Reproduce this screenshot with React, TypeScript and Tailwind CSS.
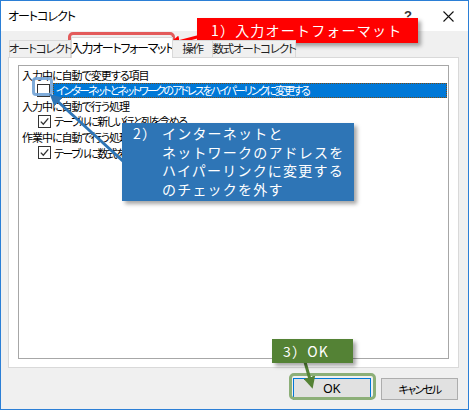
import React from "react";

const jp = "font-['Noto_Sans_CJK_JP','Noto_Sans',sans-serif] [font-feature-settings:'palt']";

function CheckBox({ checked }: { checked?: boolean }) {
  return (
    <span className="w-[13px] h-[13px] shrink-0 border border-[#333] bg-white flex items-center justify-center">
      {checked && (
        <svg width="11" height="11" viewBox="0 0 11 11">
          <path d="M1.8 5.6 L4.3 8.2 L9.3 2.3" fill="none" stroke="#333" strokeWidth="1.3" />
        </svg>
      )}
    </span>
  );
}

const tabs = [
  { label: "オートコレクト", w: "w-[62px]" },
  { label: "入力オートフォーマット", w: "w-[102px]", active: true },
  { label: "操作", w: "w-[41px]" },
  { label: "数式オートコレクト", w: "w-[84px]" },
];

export default function App() {
  return (
    <div className={`relative w-[469px] h-[410px] overflow-hidden bg-white text-[#000] ${jp}`}>
      {/* Window */}
      <div className="flex flex-col h-full border border-[#2b7fd6]">
        {/* Title bar */}
        <div className="h-[30px] flex items-center bg-white pl-[7px] pr-[14px]">
          <span className="text-[12px] tracking-[-1px]">オートコレクト</span>
          <span className="ml-auto text-[13px] font-bold text-[#333] mr-[31px] font-['Liberation_Sans',sans-serif]">?</span>
          <svg width="11" height="11" viewBox="0 0 11 11">
            <path d="M0.5 0.5 L10.5 10.5 M10.5 0.5 L0.5 10.5" stroke="#111" strokeWidth="1.1" />
          </svg>
        </div>

        {/* Body */}
        <div className="flex-1 bg-[#f0f0f0] flex flex-col pl-[7px] pr-[9px] pt-[6px]">
          {/* Tabs */}
          <div className="h-[20px] flex items-end pl-[1px] relative z-10">
            {tabs.map((t) =>
              t.active ? (
                <div
                  key={t.label}
                  className={`${t.w} h-[21px] -mb-px bg-white border border-[#d9d9d9] border-b-0 flex items-center justify-center whitespace-nowrap text-[12px] tracking-[-1.3px]`}
                >
                  {t.label}
                </div>
              ) : (
                <div
                  key={t.label}
                  className={`${t.w} h-[17px] bg-[#f0f0f0] border border-[#d9d9d9] border-b-0 -ml-px first:ml-0 flex items-center justify-center whitespace-nowrap text-[11.5px] tracking-[-1.2px] text-[#222]`}
                >
                  {t.label}
                </div>
              )
            )}
          </div>

          {/* Panel */}
          <div className="h-[311px] bg-white border border-[#d9d9d9] pl-[9px] pr-[9px] pt-[7px] pb-[8px] flex">
            <div className="flex-1 border border-[#a7a7a7] pt-[1px] flex flex-col text-[11px] whitespace-nowrap">
              <div className="h-[15.6px] flex items-center pl-[3px] tracking-[-1px]">入力中に自動で変更する項目</div>
              <div className="h-[15.6px] flex items-center pl-[18px] pr-px">
                <CheckBox />
                <span className="ml-[3px] flex-1 h-[15px] bg-[#0078d7] text-white border border-dotted border-[#7a4a10] flex items-center pl-[2px] tracking-[-2px]">
                  インターネットとネットワークのアドレスをハイパーリンクに変更する
                </span>
              </div>
              <div className="h-[15.6px] flex items-center pl-[3px] tracking-[-1px]">入力中に自動で行う処理</div>
              <div className="h-[15.6px] flex items-center pl-[19px] gap-[3px]">
                <CheckBox checked />
                <span className="tracking-[-1.5px]">テーブルに新しい行と列を含める</span>
              </div>
              <div className="h-[15.6px] flex items-center pl-[3px] tracking-[-1px]">作業中に自動で行う処理</div>
              <div className="h-[15.6px] flex items-center pl-[19px] gap-[3px]">
                <CheckBox checked />
                <span className="tracking-[-1.5px]">テーブルに数式をコピーして集計列を作成する</span>
              </div>
            </div>
          </div>

          {/* Buttons */}
          <div className="flex justify-end gap-[10px] pt-[10px] pr-px">
            <button className="w-[78px] h-[22px] bg-[#e1e1e1] border border-[#0078d7] text-[12px] font-['Liberation_Sans','Noto_Sans_CJK_JP',sans-serif]">
              OK
            </button>
            <button className="w-[77px] h-[22px] bg-[#e1e1e1] border border-[#adadad] text-[11px] tracking-[-1.5px]">
              キャンセル
            </button>
          </div>
        </div>
      </div>

      {/* Highlights */}
      <div className="absolute left-[68px] top-[32px] w-[107px] h-[26px] border-[3px] border-[#e35b5b] rounded-[5px] pointer-events-none" />
      <div className="absolute left-[32px] top-[77px] w-[21px] h-[19px] border-[3px] border-[#72a3d6]/90 rounded-[4px] pointer-events-none" />
      <div className="absolute left-[289px] top-[373px] w-[87px] h-[27px] border-[3px] border-[#8caf78] rounded-[5px] pointer-events-none" />

      {/* Arrows */}
      <svg className="absolute left-0 top-0 pointer-events-none" width="469" height="410">
        <defs>
          <marker id="ar" markerWidth="4" markerHeight="4" refX="2" refY="2" orient="auto">
            <path d="M0 0 L4 2 L0 4 Z" fill="#ff0000" />
          </marker>
          <marker id="ab" markerWidth="4" markerHeight="4" refX="2" refY="2" orient="auto">
            <path d="M0 0 L4 2 L0 4 Z" fill="#2e75b6" />
          </marker>
          <marker id="ag" markerWidth="4" markerHeight="4" refX="2" refY="2" orient="auto">
            <path d="M0 0 L4 2 L0 4 Z" fill="#548235" />
          </marker>
        </defs>
        <line x1="201" y1="36" x2="174" y2="43" stroke="#ff0000" strokeWidth="3" markerEnd="url(#ar)" />
        <line x1="125" y1="163" x2="54" y2="98" stroke="#2e75b6" strokeWidth="3" markerEnd="url(#ab)" />
        <line x1="305" y1="362" x2="311" y2="383" stroke="#548235" strokeWidth="3" markerEnd="url(#ag)" />
      </svg>

      {/* Callouts */}
      <div className="absolute left-[197px] top-[18px] w-[221px] h-[25px] bg-[#ff0000] text-white text-[14px] tracking-[1.2px] flex items-center pl-[14px] shadow-[3px_3px_4px_rgba(0,0,0,0.35)] [font-feature-settings:normal]">
        1）入力オートフォーマット
      </div>
      <div className="absolute left-[122px] top-[123px] w-[232px] h-[78px] bg-[#2e75b6] text-white text-[14px] tracking-[1.2px] leading-[18.5px] flex pl-[11px] pt-[1px] shadow-[3px_3px_4px_rgba(0,0,0,0.35)] [font-feature-settings:normal]">
        <span className="w-[29px] shrink-0">2）</span>
        <div className="flex flex-col">
          <span>インターネットと</span>
          <span>ネットワークのアドレスを</span>
          <span>ハイパーリンクに変更する</span>
          <span>のチェックを外す</span>
        </div>
      </div>
      <div className="absolute left-[272px] top-[339px] w-[81px] h-[24px] bg-[#548235] text-white text-[14px] tracking-[1.2px] flex items-center pl-[11px] shadow-[3px_3px_4px_rgba(0,0,0,0.35)] [font-feature-settings:normal]">
        3）OK
      </div>
    </div>
  );
}
